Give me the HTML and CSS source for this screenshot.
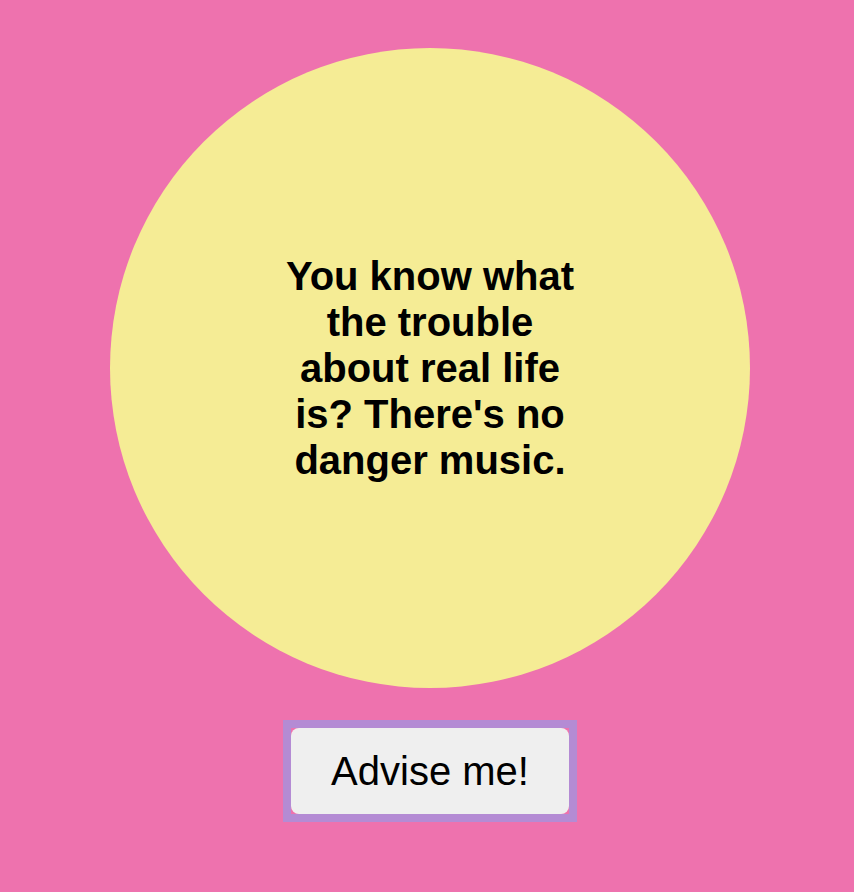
FILE: index.html
```html
<!DOCTYPE html>
<html>
<head>
<meta charset="utf-8">
<link rel="stylesheet" href="styles.css">
</head>
<body>
<main class="app">
  <div class="bubble">
    <p class="quote">You know what the trouble about real life is? There's no danger music.</p>
  </div>
  <div class="btn-frame">
    <button class="advise-btn">Advise me!</button>
  </div>
</main>
</body>
</html>
```
FILE: styles.css
```css
html, body {
  margin: 0;
  padding: 0;
  background: #ee72ae;
  height: 100%;
}
.app {
  display: flex;
  flex-direction: column;
  align-items: center;
  padding: 48px 0 0 6px;
  gap: 32px;
  font-family: "Liberation Sans", Arial, sans-serif;
}
.bubble {
  width: 640px;
  height: 640px;
  border-radius: 50%;
  background: #f5ec95;
  display: flex;
  align-items: center;
  justify-content: center;
}
.quote {
  margin: 0;
  width: 310px;
  text-align: center;
  font-weight: bold;
  font-size: 40px;
  line-height: 46px;
  color: #000;
}
.btn-frame {
  border: 8px solid #b48bd4;
  background: #ee72ae;
  display: flex;
}
.advise-btn {
  font-family: "Liberation Sans", Arial, sans-serif;
  font-size: 40px;
  line-height: 46px;
  padding: 20px 40px;
  border: none;
  border-radius: 8px;
  background: #efefef;
  color: #000;
  margin: 0;
}
```
